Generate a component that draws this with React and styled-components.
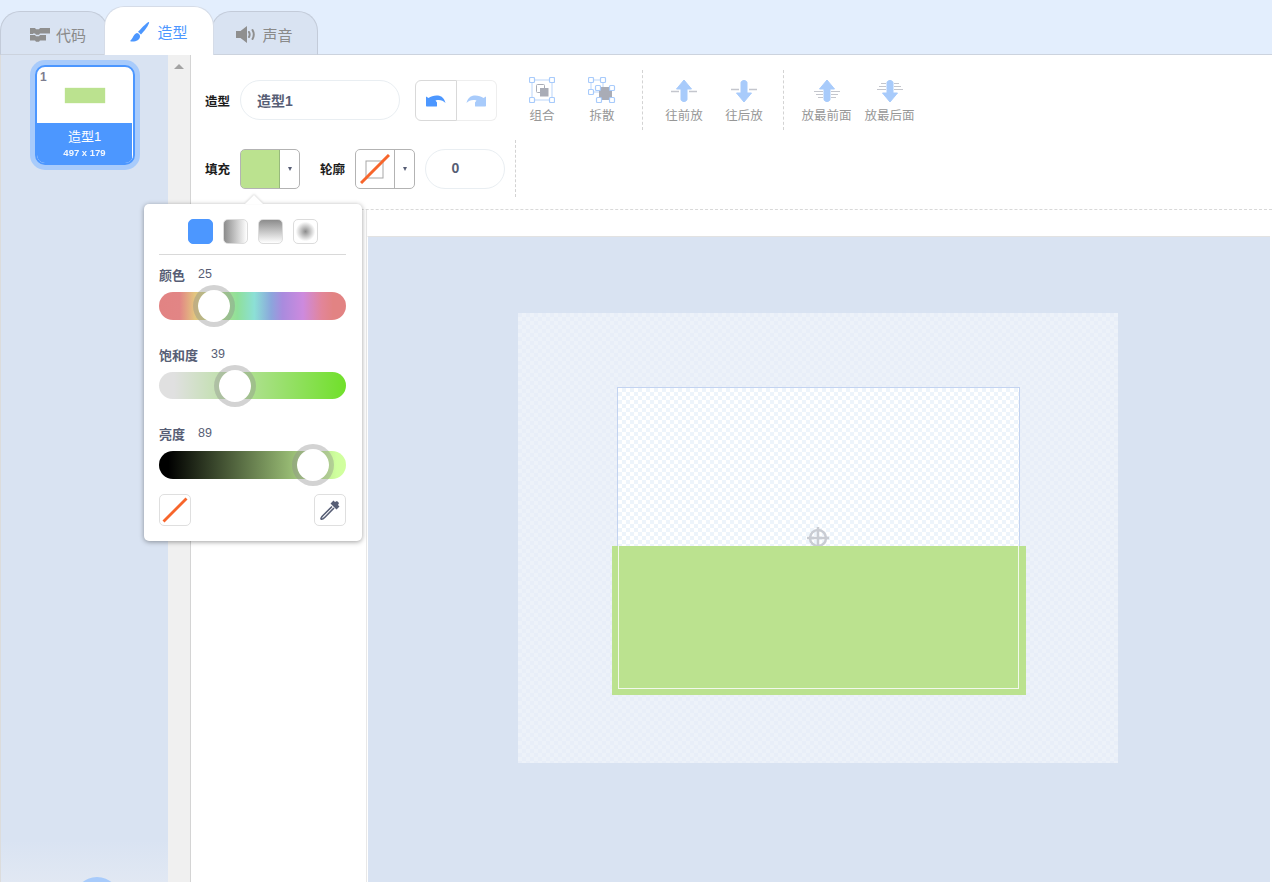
import React from "react";
import styled, { createGlobalStyle } from "styled-components";

const Global = createGlobalStyle`
  html, body { margin: 0; padding: 0; height: 100%; overflow: hidden; }
  body { font-family: "Liberation Sans", "Noto Sans CJK SC", Arial, sans-serif; background: #e3eefd; }
  * { box-sizing: border-box; }
`;

const Page = styled.div`
  width: 1272px;
  height: 882px;
  display: flex;
  flex-direction: column;
  overflow: hidden;
`;
const TabBar = styled.div`
  height: 55px;
  display: flex;
  align-items: flex-end;
  background: #e3eefd;
  border-bottom: 1px solid #ccd3de;
  padding-top: 6px;
`;
const Tab = styled.div`
  position: relative;
  z-index: ${p => (p.$active ? 2 : 1)};
  width: ${p => p.$w}px;
  height: ${p => (p.$active ? 49 : 44)}px;
  margin-left: ${p => p.$ml || 0}px;
  margin-bottom: -1px;
  display: flex;
  align-items: center;
  justify-content: center;
  gap: ${p => (p.$active ? 7 : 6)}px;
  padding-top: ${p => (p.$active ? 1 : 3)}px;
  padding-left: ${p => p.$pl || 0}px;
  border: 1px solid ${p => (p.$active ? "#d5dce8" : "#c3cbd9")};
  border-bottom: ${p => (p.$active ? "none" : "1px solid #ccd3de")};
  border-radius: 20px 20px 0 0;
  background: ${p => (p.$active ? "#fff" : "#d9e3f2")};
  color: ${p => (p.$active ? "#4c97ff" : "#8a8a8a")};
  font-size: 15px;
`;
const Main = styled.div`
  flex: 1;
  min-height: 0;
  display: grid;
  grid-template-columns: 168px 22px 1fr;
`;
const Sidebar = styled.div`
  position: relative;
  background: linear-gradient(#d9e3f2 0, #d9e3f2 785px, #e1e8f3 827px);
  border-left: 1px solid #dcdcdc;
  padding: 10px 0 0 34px;
  overflow: hidden;
`;
const Thumb = styled.div`
  position: relative;
  width: 100px;
  height: 100px;
  border: 2px solid #4c97ff;
  border-radius: 10px;
  box-shadow: 0 0 0 5px #a8cbfb;
  background: #fff;
  display: flex;
  flex-direction: column;
  overflow: hidden;
`;
const ThumbNum = styled.div`
  position: absolute;
  top: 3px;
  left: 3px;
  font-size: 12px;
  font-weight: 700;
  color: #7d7d8f;
`;
const ThumbPreview = styled.div`
  flex: 1;
  display: flex;
  justify-content: center;
  padding-top: 21px;
`;
const ThumbArt = styled.div`
  width: 40px;
  height: 15px;
  background: #bbe28f;
  box-shadow: 0 0 1px #bbe28f;
`;
const ThumbLabel = styled.div`
  height: 40px;
  background: #4c97ff;
  border-right: 1px solid #fff;
  color: #fff;
  text-align: center;
  padding-top: 5px;
`;
const ThumbName = styled.div`
  font-size: 13px;
  line-height: 17px;
`;
const ThumbSize = styled.div`
  font-size: 9.5px;
  line-height: 13px;
  margin-top: 1px;
  font-weight: 700;
  opacity: 0.92;
`;
const AddCircle = styled.div`
  position: absolute;
  left: 73px;
  top: 822px;
  width: 46px;
  height: 46px;
  border-radius: 50%;
  background: #a8cbfb;
`;
const Scrollbar = styled.div`
  background: #f0f0f0;
  display: flex;
  justify-content: center;
  padding-top: 9px;
`;
const ScrollUp = styled.div`
  width: 0;
  height: 0;
  border-left: 5px solid transparent;
  border-right: 5px solid transparent;
  border-bottom: 5px solid #a3a3a3;
`;
const Editor = styled.div`
  position: relative;
  background: #fff;
  border-left: 1px solid #d4d4d4;
  display: flex;
  flex-direction: column;
  min-width: 0;
`;
const Toolbar = styled.div`
  height: 155px;
  padding: 15px 0 0 14px;
  border-bottom: 1px dashed #d9d9d9;
`;
const Row = styled.div`
  display: flex;
  align-items: center;
  height: ${p => p.$h}px;
  margin-bottom: ${p => p.$mb || 0}px;
`;
const Label = styled.div`
  width: 35px;
  font-size: 12.5px;
  font-weight: 700;
  color: #1c1c1c;
  margin-left: ${p => p.$ml || 0}px;
`;
const Field = styled.div`
  width: ${p => p.$w}px;
  height: 40px;
  border: 1px solid #e9eef2;
  border-radius: 20px;
  margin-left: ${p => p.$ml || 0}px;
  display: flex;
  align-items: center;
  justify-content: ${p => (p.$center ? "center" : "flex-start")};
  padding-left: ${p => (p.$center ? 0 : 16)}px;
  padding-right: ${p => (p.$center ? 19 : 0)}px;
  padding-bottom: 1px;
  font-size: 14px;
  font-weight: 700;
  color: #575e75;
`;
const UndoGroup = styled.div`
  width: 82px;
  height: 41px;
  margin-left: 15px;
  display: flex;
  border-radius: 6px;
`;
const UndoBtn = styled.div`
  flex: 1;
  display: flex;
  align-items: center;
  justify-content: center;
  border: 1px solid ${p => (p.$on ? "#d9d9d9" : "#eeeeee")};
  border-left: ${p => (p.$on ? "1px solid #d9d9d9" : "none")};
  border-radius: ${p => (p.$on ? "6px 0 0 6px" : "0 6px 6px 0")};
`;
const ToolBtn = styled.div`
  width: ${p => p.$w}px;
  height: 60px;
  margin-left: ${p => p.$ml || 0}px;
  display: flex;
  flex-direction: column;
  align-items: center;
  padding-top: 7px;
  font-size: 12.5px;
  color: #979797;
  white-space: nowrap;
`;
const ToolIconBox = styled.div`
  height: 26px;
  display: flex;
  align-items: flex-end;
`;
const ToolText = styled.div`
  margin-top: 4px;
  line-height: 18px;
`;
const VDivider = styled.div`
  align-self: stretch;
  width: 0;
  border-left: 1px dashed #d3d3d3;
  margin: 0 ${p => p.$r}px 0 ${p => p.$l}px;
`;
const Swatch = styled.div`
  width: 60px;
  height: 40px;
  border: 1px solid #b3b3b3;
  border-radius: 5px;
  display: flex;
  overflow: hidden;
`;
const SwatchColor = styled.div`
  width: 40px;
  margin: -1px 0 -1px -1px;
  border: 1px solid ${p => p.$border};
  border-radius: 5px 0 0 5px;
  background: ${p => p.$bg};
  display: flex;
  align-items: center;
  justify-content: center;
`;
const SwatchArrow = styled.div`
  flex: 1;
  display: flex;
  align-items: center;
  justify-content: center;
  &::after {
    content: "";
    border-left: 2.5px solid transparent;
    border-right: 2.5px solid transparent;
    border-top: 4px solid #575e75;
  }
`;
const Body = styled.div`
  flex: 1;
  min-height: 0;
  display: flex;
  padding-top: 26px;
`;
const ToolsColumn = styled.div`
  width: 176px;
  flex: none;
  border-right: 1px solid #e8e8e8;
  margin-top: -26px;
`;
const Canvas = styled.div`
  flex: 1;
  margin-right: 2px;
  background: #d9e3f2;
  border-top: 1px solid #e2e2e2;
  border-left: 1px solid #fff;
  padding: 76px 0 0 150px;
  overflow: hidden;
`;
const Artboard = styled.div`
  position: relative;
  width: 600px;
  height: 450px;
  background-color: #e8eef8;
  background-image: conic-gradient(#edf2f9 25%, transparent 0 50%, #edf2f9 0 75%, transparent 0);
  background-size: 8px 8px;
`;
const Bitmap = styled.div`
  position: absolute;
  left: 99px;
  top: 74px;
  width: 403px;
  height: 303px;
  border: 1px solid #c3d3f0;
  background-color: #fff;
  background-image: conic-gradient(#edf4fb 25%, transparent 0 50%, #edf4fb 0 75%, transparent 0);
  background-size: 8px 8px;
`;
const CrossMark = styled.div`
  position: absolute;
  left: 288px;
  top: 213px;
  width: 24px;
  height: 24px;
`;
const GreenRect = styled.div`
  position: absolute;
  left: 94px;
  top: 233px;
  width: 414px;
  height: 149px;
  background: #bbe28f;
`;
const GreenOutline = styled.div`
  position: absolute;
  left: 100px;
  top: 233px;
  width: 401px;
  height: 143px;
  border: 1px solid #f2f8ec;
  border-top: none;
`;
const Popup = styled.div`
  position: absolute;
  left: -47px;
  top: 149px;
  z-index: 5;
  width: 218px;
  height: 337px;
  background: #fff;
  border-radius: 5px;
  box-shadow: 0 1px 5px rgba(0, 0, 0, 0.38);
  padding: 15px 16px 15px 15px;
  &::before {
    content: "";
    position: absolute;
    left: 101px;
    top: -9px;
    border-left: 9px solid transparent;
    border-right: 9px solid transparent;
    border-bottom: 9px solid #fff;
    filter: drop-shadow(0 -1px 1px rgba(0, 0, 0, 0.15));
  }
`;
const Modes = styled.div`
  display: flex;
  justify-content: center;
  gap: 10px;
  height: 24px;
`;
const Mode = styled.div`
  width: 25px;
  height: 25px;
  border-radius: 5px;
  border: 1px solid ${p => (p.$on ? "#4c97ff" : "#dcdcdc")};
  background: ${p => p.$bg};
`;
const Rule = styled.div`
  height: 1px;
  background: #d9d9d9;
  margin-top: 11px;
`;
const SliderHead = styled.div`
  height: 16px;
  margin-top: ${p => p.$mt}px;
  display: flex;
  align-items: center;
  color: #575e75;
  font-size: 12.5px;
`;
const SliderName = styled.span`
  font-size: 13px;
  font-weight: 700;
  margin-right: 13px;
`;
const Track = styled.div`
  position: relative;
  height: ${p => p.$h}px;
  margin-top: 10px;
  border-radius: 14px;
  background: ${p => p.$bg};
`;
const Knob = styled.div`
  position: absolute;
  top: -7px;
  width: 42px;
  height: 42px;
  border-radius: 50%;
  background: #fff;
  background-clip: padding-box;
  border: 5px solid rgba(140, 140, 140, 0.38);
`;
const PopupFoot = styled.div`
  display: flex;
  justify-content: space-between;
  margin-top: 15px;
`;
const FootBtn = styled.div`
  width: 32px;
  height: 32px;
  border: 1px solid #dfdfdf;
  border-radius: 5px;
  display: flex;
  align-items: center;
  justify-content: center;
`;

const BlocksIcon = () => (
  <svg width="20" height="15" viewBox="0 0 20 15">
    <path d="M0 1h5l1 1.200h3L10 1h10v5.500H10l-1 1.200H6L5 6.500H3V7H0z" fill="#8f8f8f" />
    <path d="M0 8h5l1 1.200h3L10 8h6v5.500H10L9 14.700H6l-1-1.200H0z" fill="#8f8f8f" />
  </svg>
);
const BrushIcon = () => (
  <svg width="20" height="22" viewBox="0 0 20 22">
    <path d="M19 1c.8.900-2.500 6.700-8 12.500l-3-2.700C13.500 5 18 .300 19 1z" fill="#4c97ff" />
    <path d="M7 12c2.200.500 3.300 2 3 3.800C9.600 19 6 21 1 20.500c-.800-.200-1-.800-.300-1.300C3 17.500 3.500 13 7 12z" fill="#4c97ff" />
  </svg>
);
const SpeakerIcon = () => (
  <svg width="20" height="17" viewBox="0 0 20 17">
    <path d="M0 5h4.500L11 0v17l-6.500-5H0z" fill="#8f8f8f" />
    <path d="M13 6c.8 1.500.8 3.500 0 5M16.500 4c1.600 2.800 1.600 6.200 0 9" stroke="#8f8f8f" strokeWidth="2" fill="none" strokeLinecap="round" />
  </svg>
);
const UndoIcon = ({ color, flip }) => (
  <svg width="20" height="13" viewBox="0 0 20 13" style={flip ? { transform: "scaleX(-1)" } : undefined}>
    <path d="M0 2.500l2.500 1.500C5 2 8.500 1.200 12 1.500c3.500.400 6.500 3 7.500 7.500-2.500-2.800-6-3.600-10-2.600l1.500 2v3.500c0 .500-.400.600-.800.600H1c-.600 0-1-.400-1-1z" fill={color} />
  </svg>
);
const Handle = ({ x, y }) => <rect x={x - 2.5} y={y - 2.5} width="5" height="5" rx="1" fill="#fff" stroke="#a8cbfb" strokeWidth="1.200" />;
const GroupIcon = () => (
  <svg width="26" height="26" viewBox="0 0 26 26">
    <rect x="3" y="3" width="20" height="20" fill="none" stroke="#c7dcfb" strokeWidth="1.200" />
    <rect x="7.500" y="7.500" width="8" height="8" rx="1" fill="#fff" stroke="#a9acb6" />
    <rect x="11" y="11" width="8.500" height="8.500" fill="#a9acb6" />
    <Handle x={3} y={3} /><Handle x={23} y={3} /><Handle x={3} y={23} /><Handle x={23} y={23} />
  </svg>
);
const UngroupIcon = () => (
  <svg width="28" height="26" viewBox="0 0 28 26">
    <rect x="3" y="3" width="12" height="12" fill="none" stroke="#c7dcfb" strokeWidth="1.200" />
    <rect x="11" y="10" width="13" height="13" fill="#a9acb6" />
    <Handle x={3} y={3} /><Handle x={15} y={3} /><Handle x={3} y={15} /><Handle x={10} y={11} /><Handle x={24} y={11} /><Handle x={11} y={23} /><Handle x={24} y={23} />
  </svg>
);
const ArrowUp = "M13 1L20.500 10H16V20.500C16 21.500 14.500 22.500 13 22.500S10 21.500 10 20.500V10H5.500Z";
const Arrow = ({ down }) => (
  <path d={ArrowUp} fill="#a8cbfb" stroke="#a8cbfb" strokeLinejoin="round" transform={down ? "rotate(180 13 12)" : undefined} />
);
const ForwardIcon = () => (
  <svg width="26" height="24" viewBox="0 0 26 24">
    <path d="M0 12.500h8M18 12.500h8" stroke="#c4c6cd" strokeWidth="1.500" />
    <Arrow />
  </svg>
);
const BackwardIcon = () => (
  <svg width="26" height="24" viewBox="0 0 26 24">
    <path d="M0 10.500h8M18 10.500h8" stroke="#c4c6cd" strokeWidth="1.500" />
    <Arrow down />
  </svg>
);
const FrontIcon = () => (
  <svg width="26" height="24" viewBox="0 0 26 24">
    <path d="M0 12.500h9M17 12.500h9M2 15.500h7M17 15.500h7M4 18.500h5M17 18.500h5" stroke="#c4c6cd" strokeWidth="1.200" />
    <Arrow />
  </svg>
);
const BackIcon = () => (
  <svg width="26" height="24" viewBox="0 0 26 24">
    <path d="M4 4.500h5M17 4.500h5M2 7.500h7M17 7.500h7M0 10.500h9M17 10.500h9" stroke="#c4c6cd" strokeWidth="1.200" />
    <Arrow down />
  </svg>
);
const Slash = () => (
  <svg width="26" height="26" viewBox="0 0 26 26">
    <path d="M1.500 24.500L24.500 1.500" stroke="#f7652b" strokeWidth="2.800" />
  </svg>
);
const OutlineSwatchIcon = () => (
  <svg width="30" height="30" viewBox="0 0 30 30">
    <rect x="6" y="7" width="17" height="17" fill="#fff" stroke="#a7a7a7" />
    <path d="M1 29L29 1" stroke="#f7652b" strokeWidth="3" />
  </svg>
);
const PickerIcon = () => (
  <svg width="24" height="24" viewBox="0 0 24 24">
    <path d="M13.500 6.500l4 4M15.500 2.500l1.500 1.500 2-1 2 2-1 2 1.500 1.500-3 3-6-6z" fill="#575e75" />
    <path d="M14 8.500L5 17.500c-1.200 1.200-2.500 3-1.800 3.600.7.600 2.500-.6 3.700-1.800L16 10" stroke="#575e75" strokeWidth="1.600" fill="#fff" strokeLinejoin="round" />
  </svg>
);
const Crosshair = () => (
  <svg width="24" height="24" viewBox="0 0 24 24">
    <circle cx="12" cy="12" r="8" fill="none" stroke="#c9ccd3" strokeWidth="2.500" />
    <path d="M12 1v22M1 12h22" stroke="#c9ccd3" strokeWidth="2.500" />
  </svg>
);

const HUE = "linear-gradient(90deg,#e28383 0%,#e28585 11%,#e3c47f 19%,#c9dc84 27%,#8fe09a 42%,#8ce0d6 51%,#8ba6dc 60%,#a98bde 66%,#cd8ade 77%,#e28599 87%,#e28383 93%,#e28383 100%)";
const SAT = "linear-gradient(90deg,#e0e0e0 0%,#e0e0e0 8%,#70e02a 100%)";
const BRI = "linear-gradient(90deg,#000 0%,#000 5%,#cfff9e 95%,#d2ff9f 100%)";

const sliders = [
  { name: "颜色", value: 25, bg: HUE, left: 34, mt: 11, h: 28 },
  { name: "饱和度", value: 39, bg: SAT, left: 55, mt: 26, h: 27 },
  { name: "亮度", value: 89, bg: BRI, left: 133, mt: 26, h: 28 },
];

const ToolButton = ({ icon, text, w = 60, ml }) => (
  <ToolBtn $w={w} $ml={ml}>
    <ToolIconBox>{icon}</ToolIconBox>
    <ToolText>{text}</ToolText>
  </ToolBtn>
);

export default function App() {
  return (
    <Page>
      <Global />
      <TabBar>
        <Tab $w={108} $pl={8}><BlocksIcon />代码</Tab>
        <Tab $w={110} $ml={-4} $active><BrushIcon />造型</Tab>
        <Tab $w={107} $ml={-3}><SpeakerIcon />声音</Tab>
      </TabBar>
      <Main>
        <Sidebar>
          <Thumb>
            <ThumbNum>1</ThumbNum>
            <ThumbPreview><ThumbArt /></ThumbPreview>
            <ThumbLabel>
              <ThumbName>造型1</ThumbName>
              <ThumbSize>497 x 179</ThumbSize>
            </ThumbLabel>
          </Thumb>
          <AddCircle />
        </Sidebar>
        <Scrollbar><ScrollUp /></Scrollbar>
        <Editor>
          <Toolbar>
            <Row $h={60} $mb={10}>
              <Label>造型</Label>
              <Field $w={160}>造型1</Field>
              <UndoGroup>
                <UndoBtn $on><UndoIcon color="#4c97ff" /></UndoBtn>
                <UndoBtn><UndoIcon color="#a8cbfb" flip /></UndoBtn>
              </UndoGroup>
              <ToolButton icon={<GroupIcon />} text="组合" ml={15} />
              <ToolButton icon={<UngroupIcon />} text="拆散" />
              <VDivider $l={10} $r={11} />
              <ToolButton icon={<ForwardIcon />} text="往前放" />
              <ToolButton icon={<BackwardIcon />} text="往后放" />
              <VDivider $l={9} $r={11} />
              <ToolButton icon={<FrontIcon />} text="放最前面" w={63} />
              <ToolButton icon={<BackIcon />} text="放最后面" w={63} />
            </Row>
            <Row $h={57}>
              <Label>填充</Label>
              <Swatch>
                <SwatchColor $bg="#bbe28f" $border="#97b97c" />
                <SwatchArrow />
              </Swatch>
              <Label $ml={20}>轮廓</Label>
              <Swatch>
                <SwatchColor $bg="#fff" $border="#b3b3b3"><OutlineSwatchIcon /></SwatchColor>
                <SwatchArrow />
              </Swatch>
              <Field $w={80} $ml={10} $center>0</Field>
              <VDivider $l={10} $r={0} />
            </Row>
          </Toolbar>
          <Body>
            <ToolsColumn />
            <Canvas>
              <Artboard>
                <Bitmap />
                <CrossMark><Crosshair /></CrossMark>
                <GreenRect />
                <GreenOutline />
              </Artboard>
            </Canvas>
          </Body>
          <Popup>
            <Modes>
              <Mode $on $bg="#4c97ff" />
              <Mode $bg="linear-gradient(90deg,#8c8c8c,#fff)" />
              <Mode $bg="linear-gradient(180deg,#8c8c8c,#fff)" />
              <Mode $bg="radial-gradient(circle,#8c8c8c 0,#fff 60%)" />
            </Modes>
            <Rule />
            {sliders.map(s => (
              <div key={s.name}>
                <SliderHead $mt={s.mt}>
                  <SliderName>{s.name}</SliderName>{s.value}
                </SliderHead>
                <Track $bg={s.bg} $h={s.h}><Knob style={{ left: s.left }} /></Track>
              </div>
            ))}
            <PopupFoot>
              <FootBtn><Slash /></FootBtn>
              <FootBtn><PickerIcon /></FootBtn>
            </PopupFoot>
          </Popup>
        </Editor>
      </Main>
    </Page>
  );
}
